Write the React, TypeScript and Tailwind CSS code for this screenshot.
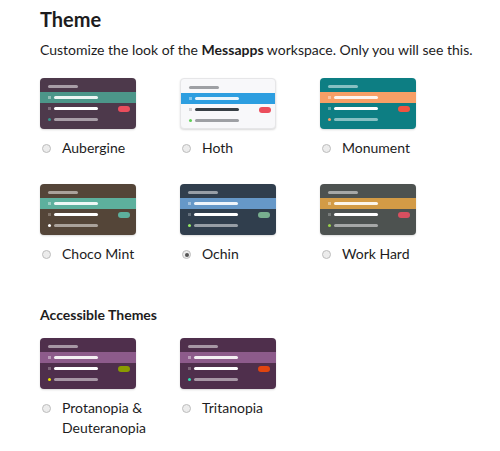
import React from 'react';

type Theme = {
  name: string;
  bg: string;
  active: string;
  head: string;
  unread: string;
  muted: string;
  square: string;
  presence: string;
  badge: string;
  border?: string;
  selected?: boolean;
};

const themes: Theme[] = [
  { name: 'Aubergine', bg: 'bg-[#4d394b]', active: 'bg-[#4c9689]', head: 'bg-[#a89ea7]', unread: 'bg-white', muted: 'bg-[#a89ea7]', square: 'bg-[#7c6b7a]', presence: 'bg-[#38978d]', badge: 'bg-[#eb4d5c]' },
  { name: 'Hoth', bg: 'bg-[#f8f8fa]', active: 'bg-[#2d9ee0]', head: 'bg-[#9ea0a4]', unread: 'bg-[#383f45]', muted: 'bg-[#9ea0a4]', square: 'bg-[#d0d0d4]', presence: 'bg-[#60d156]', badge: 'bg-[#eb4d5c]', border: 'border border-[#e6e6e8]' },
  { name: 'Monument', bg: 'bg-[#0d7e83]', active: 'bg-[#f79f66]', head: 'bg-[#86c0c2]', unread: 'bg-white', muted: 'bg-[#86c0c2]', square: 'bg-[#5aa6a9]', presence: 'bg-[#f79f66]', badge: 'bg-[#f15340]' },
  { name: 'Choco Mint', bg: 'bg-[#544538]', active: 'bg-[#5db09d]', head: 'bg-[#aaa29b]', unread: 'bg-white', muted: 'bg-[#aaa29b]', square: 'bg-[#7f7267]', presence: 'bg-white', badge: 'bg-[#5db09d]' },
  { name: 'Ochin', bg: 'bg-[#303e4d]', active: 'bg-[#6698c8]', head: 'bg-[#979ea6]', unread: 'bg-white', muted: 'bg-[#979ea6]', square: 'bg-[#646f7b]', presence: 'bg-[#94e864]', badge: 'bg-[#78af8f]', selected: true },
  { name: 'Work Hard', bg: 'bg-[#4d5250]', active: 'bg-[#d39b46]', head: 'bg-[#a6a8a7]', unread: 'bg-white', muted: 'bg-[#a6a8a7]', square: 'bg-[#787c7a]', presence: 'bg-[#99d04a]', badge: 'bg-[#d84f5f]' },
];

const accessible: Theme[] = [
  { name: 'Protanopia & Deuteranopia', bg: 'bg-[#4f2f4c]', active: 'bg-[#8d5b8b]', head: 'bg-[#a797a5]', unread: 'bg-white', muted: 'bg-[#a797a5]', square: 'bg-[#7b6378]', presence: 'bg-[#e9e400]', badge: 'bg-[#8a9b00]' },
  { name: 'Tritanopia', bg: 'bg-[#4f2f4c]', active: 'bg-[#8d5b8b]', head: 'bg-[#a797a5]', unread: 'bg-white', muted: 'bg-[#a797a5]', square: 'bg-[#7b6378]', presence: 'bg-[#2ee0b0]', badge: 'bg-[#e0450f]' },
];

function Preview({ t }: { t: Theme }) {
  return (
    <div className={`h-[51px] w-[96px] overflow-hidden rounded-[4px] pt-[3px] shadow-[0_1px_2px_rgba(0,0,0,0.15)] ${t.bg} ${t.border ?? ''}`}>
      <div className="flex h-[11px] items-center pl-[8px]">
        <div className={`h-[3px] w-[30px] rounded-full ${t.head}`} />
      </div>
      <div className={`flex h-[11px] items-center pl-[8px] ${t.active}`}>
        <div className="h-[3px] w-[3px] bg-white/40" />
        <div className="ml-[3px] h-[3px] w-[44px] rounded-full bg-white/90" />
      </div>
      <div className="flex h-[11px] items-center pl-[8px]">
        <div className={`h-[3px] w-[3px] ${t.square}`} />
        <div className={`ml-[3px] h-[3px] w-[44px] rounded-full ${t.unread}`} />
        <div className={`ml-[20px] h-[6px] w-[12px] rounded-full ${t.badge}`} />
      </div>
      <div className="flex h-[11px] items-center pl-[8px]">
        <div className={`h-[3px] w-[3px] rounded-full ${t.presence}`} />
        <div className={`ml-[3px] h-[3px] w-[44px] rounded-full ${t.muted}`} />
      </div>
      <div className="flex h-[11px] items-center pl-[8px]">
        <div className={`h-[3px] w-[3px] ${t.square}`} />
        <div className={`ml-[3px] h-[3px] w-[44px] rounded-full ${t.muted}`} />
      </div>
    </div>
  );
}

function ThemeOption({ t }: { t: Theme }) {
  return (
    <div className="flex flex-col">
      <Preview t={t} />
      <div className="mt-[9px] flex items-start">
        <span className="mt-[6px] ml-[2px] mr-[11px] flex h-[9px] w-[9px] shrink-0 items-center justify-center rounded-full border border-[#bdbdbd] bg-[#ececec]">
          {t.selected && <span className="h-[4px] w-[4px] rounded-full bg-[#555]" />}
        </span>
        <span className="text-[14px] leading-[20px]">{t.name}</span>
      </div>
    </div>
  );
}

export default function App() {
  return (
    <div className="min-h-screen bg-white px-[40px] pt-[5px] text-[#1d1c1d]" style={{ fontFamily: 'Lato, "Open Sans", sans-serif' }}>
      <h1 className="text-[20px] font-bold leading-[28px]">Theme</h1>
      <p className="mt-[6px] whitespace-nowrap text-[14px] leading-[22px]">
        Customize the look of the <span className="font-bold">Messapps</span> workspace. Only you will see this.
      </p>

      <div className="mt-[17px] grid grid-cols-[140px_140px_140px] gap-y-[26px]">
        {themes.map((t) => (
          <ThemeOption key={t.name} t={t} />
        ))}
      </div>

      <h2 className="mt-[41px] text-[14px] font-bold leading-[20px]">Accessible Themes</h2>
      <div className="mt-[13px] grid grid-cols-[140px_140px_140px]">
        {accessible.map((t) => (
          <ThemeOption key={t.name} t={t} />
        ))}
      </div>
    </div>
  );
}
